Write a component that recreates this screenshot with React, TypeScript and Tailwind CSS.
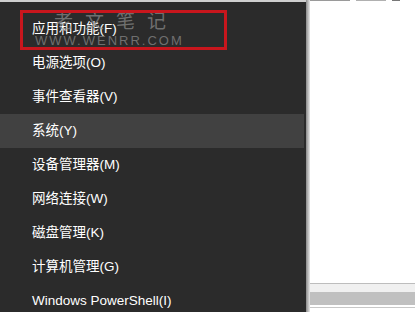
import React from 'react';

const items = [
    '应用和功能(F)',
    '电源选项(O)',
    '事件查看器(V)',
    '系统(Y)',
    '设备管理器(M)',
    '网络连接(W)',
    '磁盘管理(K)',
    '计算机管理(G)',
    'Windows PowerShell(I)',
];

const font = { fontFamily: '"Liberation Sans", "Noto Sans CJK SC", sans-serif' };

export default function App() {
    return (
        <div className="relative w-[415px] h-[312px] overflow-hidden bg-white flex" style={font}>
            {/* menu */}
            <div className="w-[306px] h-full bg-[#2b2b2b] flex flex-col pt-[10px] border-t-2 border-[#cfcfcf]">
                {items.map((label, i) => (
                    <div
                        key={label}
                        className={`h-[34px] shrink-0 flex items-center pl-[32px] text-[13.5px] text-white w-[304px] ${
                            i === 3 ? 'bg-[#414141]' : ''
                        }`}
                    >
                        {label}
                    </div>
                ))}
            </div>

            {/* shadow + window behind */}
            <div className="w-[4px] h-full bg-gradient-to-r from-[#8a8a8a] to-[#e8e8e8]" />
            <div className="flex-1 h-full flex flex-col">
                <div className="h-[2px] flex gap-[6px] items-start">
                    <div className="w-[40px] h-[1px] bg-[#9a9a9a]" />
                    <div className="w-[30px] h-[1px] bg-[#b0b0b0]" />
                    <div className="w-[8px] h-[1px] bg-[#777]" />
                </div>
                <div className="h-[281px]" />
                <div className="h-[1px] bg-[#bdbdbd]" />
                <div className="h-[8px] bg-[#f0f0f0]" />
                <div className="h-[13px] bg-[#c0c0c0]" />
                <div className="h-[2px] bg-white" />
                <div className="h-[1px] bg-[#c8c8c8]" />
            </div>

            {/* watermark */}
            <div className="absolute left-[54px] top-[11px] flex gap-[12px] text-[19px] leading-[22px] text-[#8e8e8e]/70 pointer-events-none">
                <span>老</span>
                <span>文</span>
                <span>笔</span>
                <span>记</span>
            </div>
            <div className="absolute left-[35px] top-[34px] text-[13px] leading-[14px] tracking-[2px] text-[#8e8e8e]/70 pointer-events-none">
                WWW.WENRR.COM
            </div>

            {/* red highlight box */}
            <div className="absolute left-[20px] top-[10px] w-[207px] h-[40px] border-[3px] border-[#c8161d]" />
        </div>
    );
}
